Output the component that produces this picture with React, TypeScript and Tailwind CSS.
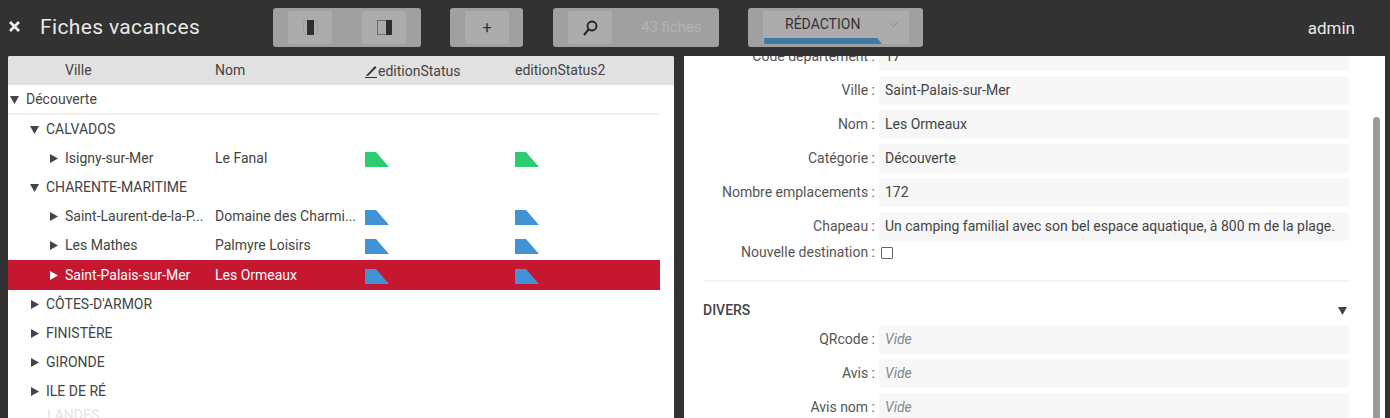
const F = "font-['Roboto',sans-serif]";

function Tri({ open, className = "" }: { open?: boolean; className?: string }) {
  return (
    <svg width="9" height="9" viewBox="0 0 9 9" className={`shrink-0 ${className}`}>
      {open ? <path d="M0 1h9L4.5 9z" fill="currentColor" /> : <path d="M1 0l8 4.5L1 9z" fill="currentColor" />}
    </svg>
  );
}

function Status({ color }: { color: string }) {
  return (
    <svg width="24" height="15" viewBox="0 0 24 15" className="block">
      <path d="M0 0h11l13 15H0z" fill={color} />
    </svg>
  );
}

function ToolBtn({ children }: { children: React.ReactNode }) {
  return <div className="w-[44px] h-[33px] bg-[#acacac] rounded-[2px] flex items-center justify-center">{children}</div>;
}

type Row = { label: string; level: 1 | 2; open?: boolean; nom?: string; status?: string; selected?: boolean };

const rows: Row[] = [
  { label: "CALVADOS", level: 1, open: true },
  { label: "Isigny-sur-Mer", level: 2, nom: "Le Fanal", status: "#2ecc71" },
  { label: "CHARENTE-MARITIME", level: 1, open: true },
  { label: "Saint-Laurent-de-la-P...", level: 2, nom: "Domaine des Charmi...", status: "#4292d6" },
  { label: "Les Mathes", level: 2, nom: "Palmyre Loisirs", status: "#4292d6" },
  { label: "Saint-Palais-sur-Mer", level: 2, nom: "Les Ormeaux", status: "#4292d6", selected: true },
  { label: "CÔTES-D'ARMOR", level: 1 },
  { label: "FINISTÈRE", level: 1 },
  { label: "GIRONDE", level: 1 },
  { label: "ILE DE RÉ", level: 1 },
];

function TreeRow({ row }: { row: Row }) {
  return (
    <div className={`h-[29.1px] flex items-center text-[14px] w-[652px] ${row.selected ? "bg-[#c5172f] text-white" : "text-[#444]"}`}>
      <div className={`w-[207px] flex items-center whitespace-nowrap ${row.level === 1 ? "pl-[22px]" : "pl-[41px]"}`}>
        <Tri open={row.open} />
        <span className="ml-[7px]">{row.label}</span>
      </div>
      <div className="w-[150px] whitespace-nowrap">{row.nom}</div>
      {row.status && (
        <>
          <div className="w-[150px] pt-[2px]"><Status color={row.status} /></div>
          <div className="pt-[2px]"><Status color={row.status} /></div>
        </>
      )}
    </div>
  );
}

function Field({ label, value, empty }: { label: string; value: string; empty?: boolean }) {
  return (
    <div className="flex items-center h-[34px] text-[14px]">
      <div className="w-[172px] text-right text-[#555] whitespace-nowrap">{label} :</div>
      <div className={`ml-[4px] w-[470px] h-[29px] rounded-[3px] bg-[#f7f7f7] flex items-center px-[6px] whitespace-nowrap ${empty ? "italic text-[#888]" : "text-[#444]"}`}>
        {value}
      </div>
    </div>
  );
}

export default function App() {
  return (
    <div className={`${F} w-[1390px] h-[418px] bg-[#323232] overflow-hidden flex flex-col`}>
      <header className="h-[56px] shrink-0 flex items-start relative">
        <div className="w-[28px] pl-[8px] pt-[20px]">
          <svg width="13" height="13" viewBox="0 0 13 13"><path d="M2 2l9 9M11 2l-9 9" stroke="#eee" strokeWidth="2.8" /></svg>
        </div>
        <div className="ml-[12px] pt-[13px] text-[21px] leading-[28px] text-[#e8e8e8] tracking-[0.35px] w-[233px]">Fiches vacances</div>
        <div className="mt-[8px] flex h-[39px]">
          <div className="w-[148px] bg-[#a0a0a0] rounded-[3px] flex items-center pl-[15px] gap-[30px]">
            <ToolBtn>
              <svg width="15" height="15" viewBox="0 0 15 15"><rect x="0.5" y="0.5" width="14" height="14" rx="3" fill="none" stroke="#9a9a9a" /><rect x="4" y="0" width="7" height="15" fill="#2f2f2f" /></svg>
            </ToolBtn>
            <ToolBtn>
              <svg width="15" height="15" viewBox="0 0 15 15"><rect x="0.5" y="0.5" width="14" height="14" fill="none" stroke="#6e6e6e" /><rect x="9" y="0" width="6" height="15" fill="#2f2f2f" /></svg>
            </ToolBtn>
          </div>
          <div className="ml-[29px] w-[73px] bg-[#a0a0a0] rounded-[3px] flex items-center pl-[15px]">
            <ToolBtn><span className="text-[16px] text-[#333]">+</span></ToolBtn>
          </div>
          <div className="ml-[30px] w-[166px] bg-[#a0a0a0] rounded-[3px] flex items-center pl-[15px]">
            <ToolBtn>
              <svg width="15" height="16" viewBox="0 0 15 16"><circle cx="9" cy="6" r="4.5" fill="none" stroke="#222" strokeWidth="1.8" /><path d="M5.5 9.5L1 15" stroke="#222" strokeWidth="2" /></svg>
            </ToolBtn>
            <span className="ml-[29px] text-[15px] text-[#b4b4b4]">43 fiches</span>
          </div>
          <div className="ml-[29px] w-[175px] bg-[#a0a0a0] rounded-[3px] pl-[15px] pt-[3px]">
            <div className="w-[146px] h-[33px] bg-[#acacac] relative">
              <div className="flex items-center h-[27px] text-[14px] text-[#333]">
                <span className="ml-[22px]">RÉDACTION</span>
                <svg width="9" height="6" viewBox="0 0 9 6" className="ml-[29px]"><path d="M1 1l3.5 3.5L8 1" fill="none" stroke="#888" /></svg>
              </div>
              <svg width="118" height="6" viewBox="0 0 118 6" className="absolute left-[1px] bottom-0"><path d="M0 0h113l5 6H0z" fill="#3f7ba6" /></svg>
            </div>
          </div>
        </div>
        <div className="absolute right-[35px] top-[16px] text-[17px] leading-[24px] text-[#e8e8e8]">admin</div>
      </header>
      <main className="flex-1 min-h-0 flex pl-[8px]">
        <section className="w-[666px] bg-white rounded-t-[2px] overflow-hidden shrink-0">
          <div className="h-[29px] bg-[#e1e1e1] flex items-center text-[14px] text-[#444]">
            <div className="w-[207px] pl-[57px]">Ville</div>
            <div className="w-[150px]">Nom</div>
            <div className="w-[150px] flex items-center pt-[2px]">
              <svg width="13" height="13" viewBox="0 0 13 13"><path d="M1 10.5L10 1l1.5 1.5L3 11z" fill="#333" /><path d="M0 12.5h12" stroke="#333" /></svg>
              <span>editionStatus</span>
            </div>
            <div>editionStatus2</div>
          </div>
          <div className="h-[30px] flex items-center text-[14px] text-[#444] border-b-2 border-[#f0f0f0] w-[652px] pl-[2px]">
            <Tri open />
            <span className="ml-[7px]">Découverte</span>
          </div>
          {rows.map((r) => <TreeRow key={r.label} row={r} />)}
          <div className="pl-[39px] -mt-[1px] text-[14px] text-[#e4e4e4]">LANDES</div>
        </section>
        <section className="ml-[10px] flex-1 mr-[5px] bg-white overflow-hidden relative">
          <div className="pl-[19px] -mt-[17px]">
            <Field label="Code département" value="17" />
            <Field label="Ville" value="Saint-Palais-sur-Mer" />
            <Field label="Nom" value="Les Ormeaux" />
            <Field label="Catégorie" value="Découverte" />
            <Field label="Nombre emplacements" value="172" />
            <Field label="Chapeau" value="Un camping familial avec son bel espace aquatique, à 800 m de la plage." />
            <div className="flex items-center h-[18px] text-[14px]">
              <div className="w-[172px] text-right text-[#555]">Nouvelle destination :</div>
              <div className="ml-[6px] w-[12px] h-[12px] border border-[#666] rounded-[1px] mt-[2px]" />
            </div>
            <div className="w-[646px] border-b-2 border-[#f2f2f2] mt-[19px]" />
            <div className="w-[646px] flex items-center justify-between h-[24px] mt-[16px] text-[14px] font-medium text-[#444]">
              <span>DIVERS</span>
              <Tri open className="text-[#444] mr-[2px]" />
            </div>
            <Field label="QRcode" value="Vide" empty />
            <Field label="Avis" value="Vide" empty />
            <Field label="Avis nom" value="Vide" empty />
          </div>
          <div className="absolute right-[5px] top-[61px] bottom-0 w-[7px] bg-[#9b9b9b] rounded-t-full" />
        </section>
      </main>
    </div>
  );
}
